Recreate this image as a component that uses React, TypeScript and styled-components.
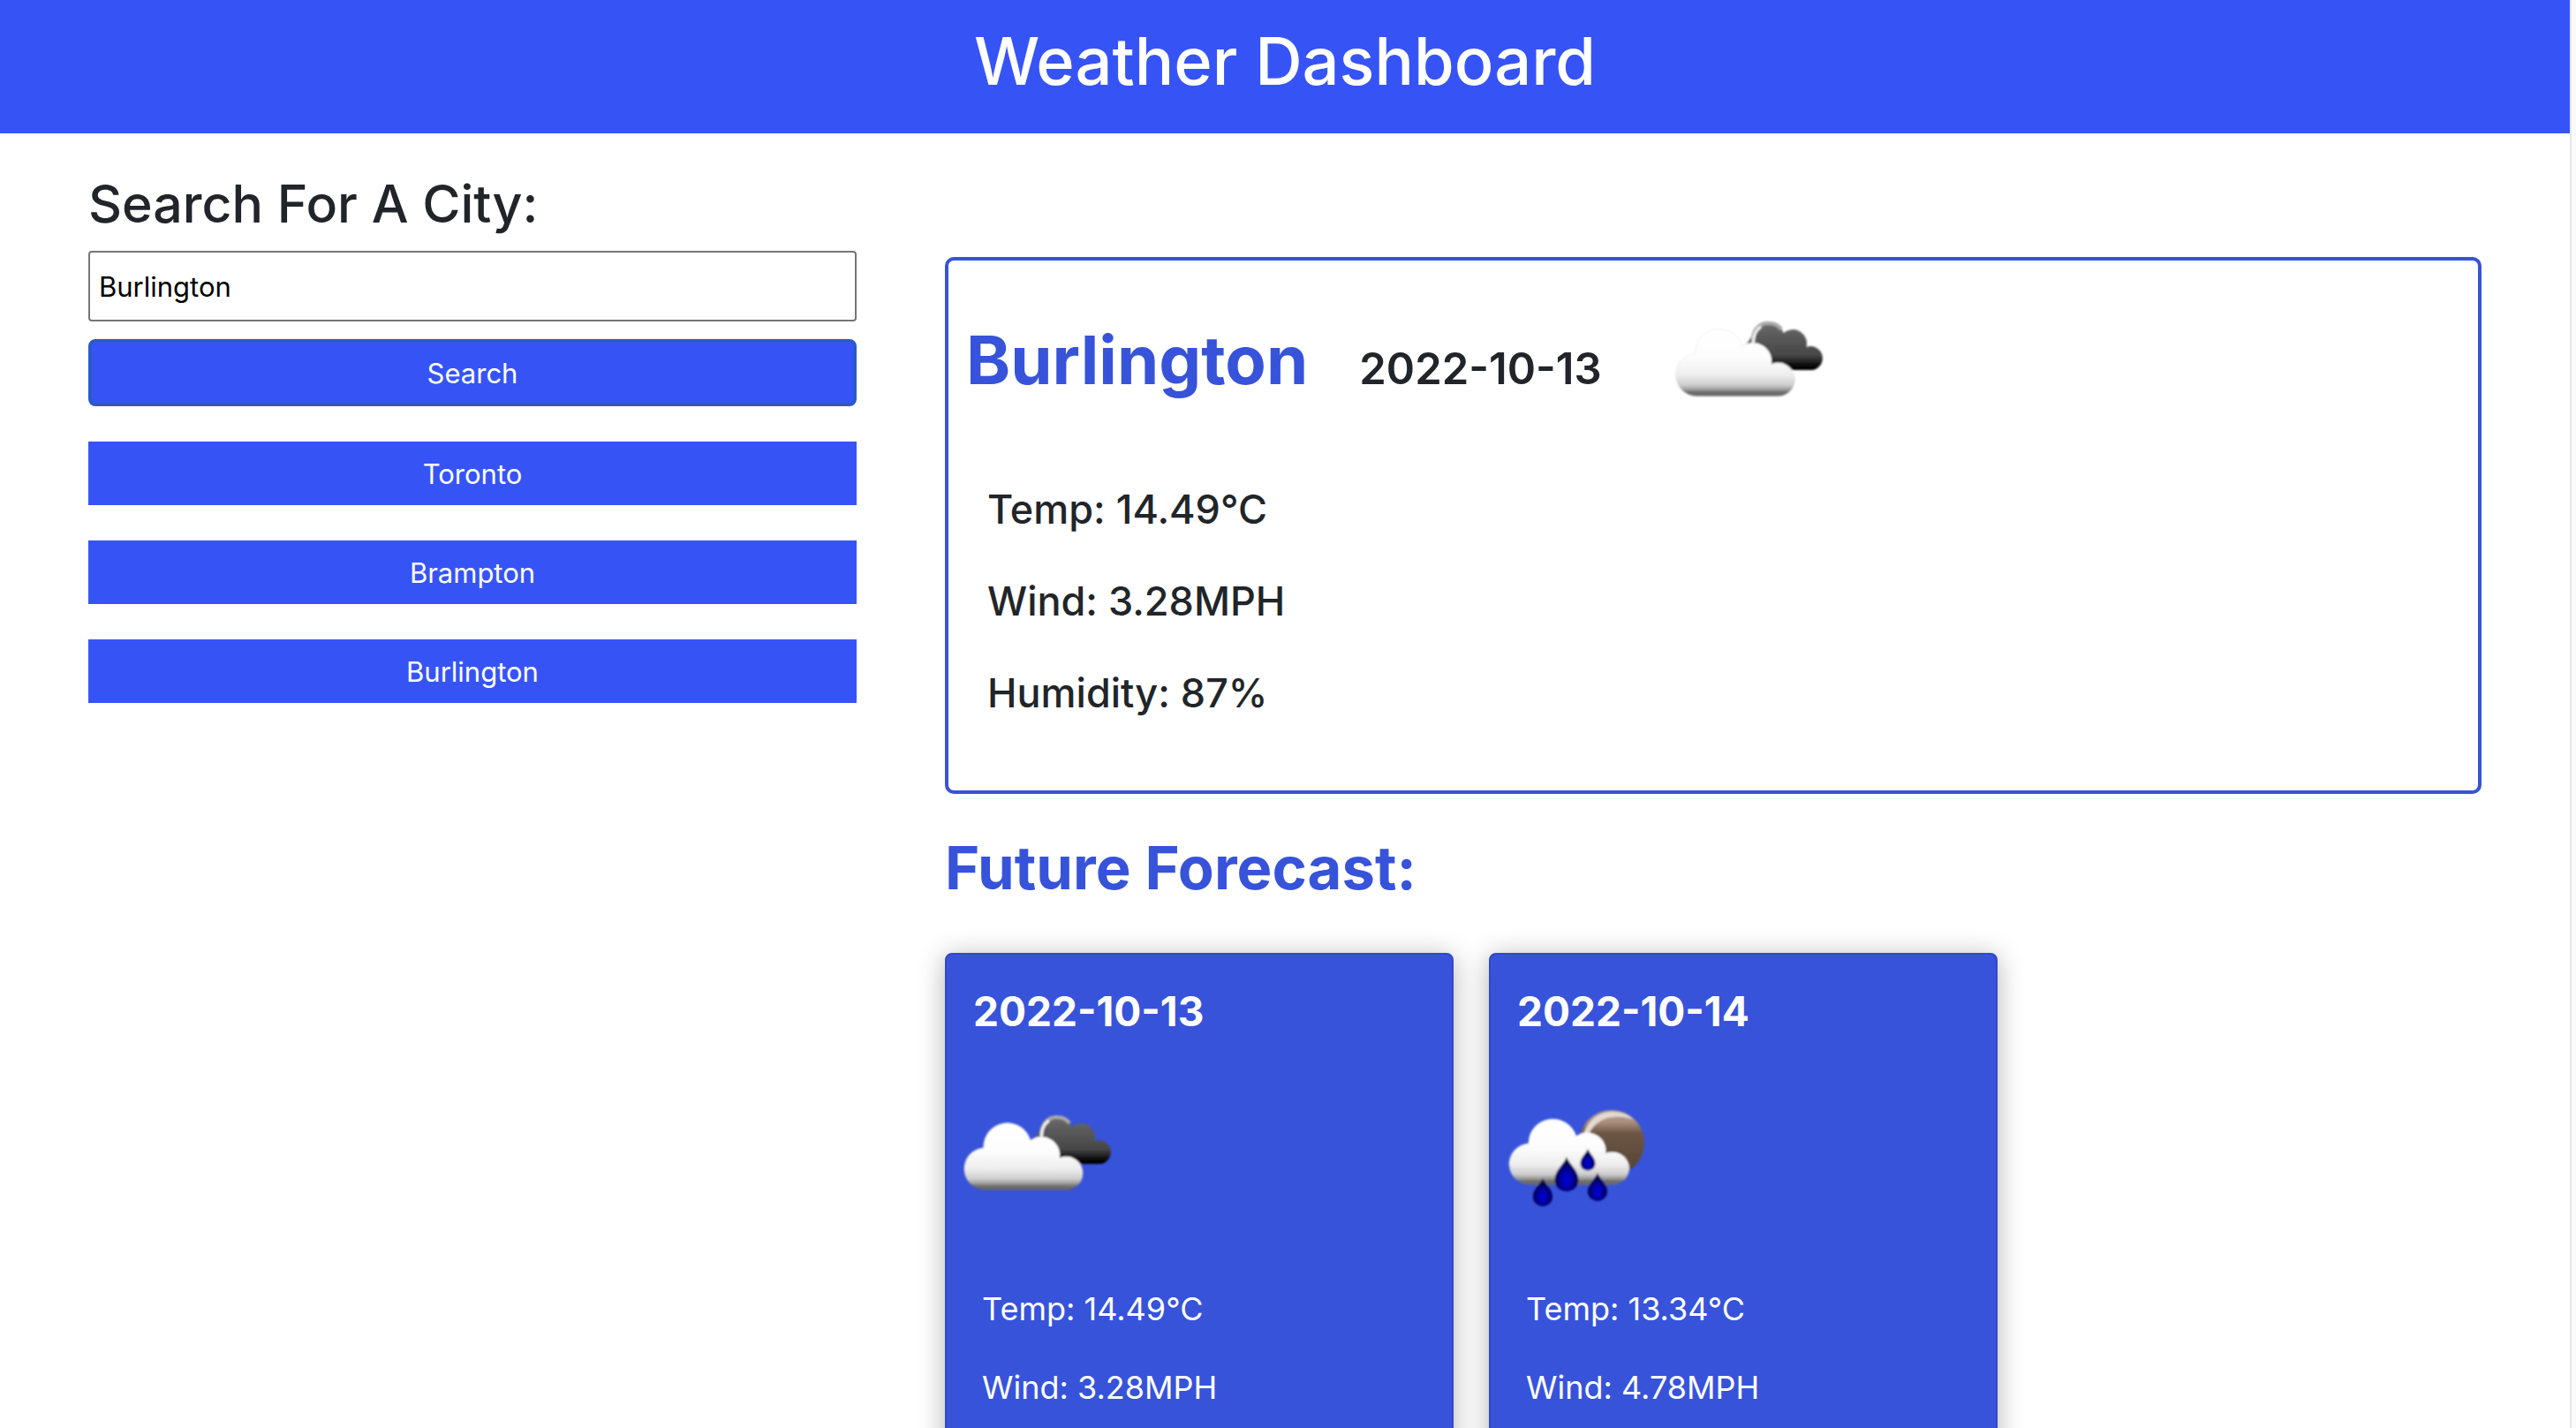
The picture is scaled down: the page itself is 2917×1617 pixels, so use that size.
import React, { useId, useState } from "react";
import styled, { createGlobalStyle } from "styled-components";

const colors = {
  bright: "#3654f6",
  royal: "#3753da",
  ink: "#212529",
};

const GlobalStyle = createGlobalStyle`
  *, *::before, *::after { box-sizing: border-box; }
  body {
    margin: 0;
    background: #ffffff;
    color: ${colors.ink};
    font-family: Inter, "Liberation Sans", sans-serif;
    font-size: 31px;
    font-weight: 400;
  }
  h1, h2, h3, p, ul { margin: 0; padding: 0; }
  button, input { font: inherit; margin: 0; }
`;

const Page = styled.div`
  display: grid;
  grid-template-columns: minmax(0, 1fr) 7px;
  height: 100vh;
  overflow: hidden;
`;

const ScrollTrack = styled.div`
  border-left: 2px solid #e8e8e8;
  background: #fafafa;
`;

const Header = styled.header`
  padding: 21px 0 34px;
  background: ${colors.bright};
  color: #ffffff;
  text-align: center;
`;

const Title = styled.h1`
  font-size: 74px;
  font-weight: 500;
  line-height: 96px;
`;

const Columns = styled.main`
  display: grid;
  grid-template-columns: minmax(0, 1fr) minmax(0, 2fr);
  gap: 100px;
  padding: 0 100px;
`;

const SearchColumn = styled.form`
  display: flex;
  flex-direction: column;
  padding-top: 44px;
`;

const SearchHeading = styled.h2`
  margin-bottom: 17px;
  font-size: 59px;
  font-weight: 500;
  line-height: 72px;
`;

const CityInput = styled.input`
  width: 100%;
  height: 80px;
  margin-bottom: 20px;
  padding: 2px 10px;
  border: 2px solid #767676;
  border-radius: 4px;
  outline: none;
  background: #ffffff;
  color: #000000;
`;

const SearchButton = styled.button`
  height: 76px;
  border: 4px solid #285bc8;
  border-radius: 8px;
  background: ${colors.bright};
  color: #ffffff;
  cursor: pointer;
`;

const History = styled.ul`
  display: flex;
  flex-direction: column;
  gap: 40px;
  margin-top: 40px;
  list-style: none;
`;

const HistoryButton = styled.button`
  display: block;
  width: 100%;
  height: 72px;
  border: 0;
  background: ${colors.bright};
  color: #ffffff;
  cursor: pointer;
`;

const WeatherColumn = styled.div`
  padding-top: 140px;
`;

const CurrentCard = styled.section`
  padding: 10px 20px 82px;
  border: 4px solid ${colors.royal};
  border-radius: 10px;
`;

const CurrentHead = styled.div`
  display: flex;
  align-items: center;
  gap: 64px;
`;

const CurrentTitle = styled.div`
  display: flex;
  align-items: baseline;
  gap: 58px;
  padding-top: 4px;
`;

const CityName = styled.h2`
  color: ${colors.royal};
  font-size: 76px;
  font-weight: 700;
  line-height: 92px;
`;

const CurrentDate = styled.h3`
  font-size: 49px;
  font-weight: 600;
  line-height: 60px;
`;

const CurrentReadings = styled.div`
  display: flex;
  flex-direction: column;
  gap: 48px;
  margin-top: 44px;
  padding-left: 24px;
  font-size: 45px;
  font-weight: 500;
  line-height: 56px;
`;

const ForecastHeading = styled.h2`
  margin: 44px 0 56px;
  color: ${colors.royal};
  font-size: 67px;
  font-weight: 700;
  line-height: 80px;
`;

const ForecastList = styled.div`
  display: flex;
  gap: 40px;
`;

const ForecastCard = styled.article`
  flex: 0 1 576px;
  min-height: 720px;
  padding-top: 36px;
  border: 2px solid #2f4bc2;
  border-radius: 8px;
  background: ${colors.royal};
  box-shadow: 0 4px 30px rgba(0, 0, 0, 0.3);
  color: #ffffff;
`;

const ForecastDate = styled.h3`
  margin-bottom: 31px;
  padding-left: 30px;
  font-size: 46px;
  font-weight: 700;
  line-height: 56px;
`;

const ForecastReadings = styled.div`
  display: flex;
  flex-direction: column;
  gap: 41px;
  margin-top: 54px;
  padding-left: 40px;
  font-size: 36px;
  line-height: 48px;
`;

const IconSvg = styled.svg`
  display: block;
  flex: none;
  width: 200px;
  height: 200px;
`;

const CLOUD =
  "M44 143.5A24 24 0 0 1 39.5 95.5A27.3 27.3 0 0 1 93 87A21 21 0 0 1 126 107A19 19 0 1 1 134 143.5Z";
const BACK_CLOUD =
  "M93 88C99 84 100 81 103.5 76A18.5 18.5 0 0 1 139.5 72A16 16 0 0 1 165.5 88A13.5 13.5 0 1 1 172 114L128 114L110 92Z";
const DROP =
  "M0 0C2.5 8 13.5 15 13.5 26A13.5 13 0 0 1 -13.5 26C-13.5 15 -2.5 8 0 0Z";

const DROPS = [
  { x: 86, y: 106, scale: 1 },
  { x: 110, y: 97, scale: 0.63 },
  { x: 59, y: 130, scale: 0.82 },
  { x: 121, y: 124, scale: 0.82 },
];

type Sky = "clouds" | "rain";

function WeatherIcon({ sky }: { sky: Sky }) {
  const id = useId();
  const ref = (name: string) => `url(#${id}${name})`;
  return (
    <IconSvg viewBox="0 0 200 200" role="img" aria-label={sky}>
      <defs>
        <linearGradient id={`${id}cloud`} x1="0" y1="66" x2="0" y2="144" gradientUnits="userSpaceOnUse">
          <stop offset="0" stopColor="#ffffff" />
          <stop offset="0.42" stopColor="#fdfdfd" />
          <stop offset="0.68" stopColor="#efefef" />
          <stop offset="0.83" stopColor="#cfcfcf" />
          <stop offset="0.9" stopColor="#9c9c9c" />
          <stop offset="0.94" stopColor="#6c6c6c" />
          <stop offset="1" stopColor="#6a6a6a" />
        </linearGradient>
        <linearGradient id={`${id}back`} x1="0" y1="57" x2="0" y2="114" gradientUnits="userSpaceOnUse">
          <stop offset="0" stopColor="#707070" />
          <stop offset="0.3" stopColor="#5c5c5c" />
          <stop offset="0.7" stopColor="#474747" />
          <stop offset="0.92" stopColor="#080808" />
          <stop offset="1" stopColor="#000000" />
        </linearGradient>
        <linearGradient id={`${id}moon`} x1="0" y1="52" x2="0" y2="127" gradientUnits="userSpaceOnUse">
          <stop offset="0" stopColor="#b9a79c" />
          <stop offset="0.2" stopColor="#a98d7b" />
          <stop offset="0.36" stopColor="#6d5645" />
          <stop offset="1" stopColor="#54432f" />
        </linearGradient>
        <radialGradient id={`${id}drop`} cx="0.5" cy="0.66" r="0.52">
          <stop offset="0" stopColor="#0000dc" />
          <stop offset="0.35" stopColor="#0000b8" />
          <stop offset="0.75" stopColor="#00006c" />
          <stop offset="1" stopColor="#000044" />
        </radialGradient>
        <filter id={`${id}soft`} x="0" y="0" width="200" height="200" filterUnits="userSpaceOnUse">
          <feGaussianBlur stdDeviation="1.1" />
        </filter>
      </defs>
      {sky === "clouds" ? (
        <g filter={ref("soft")} transform="translate(2 0)">
          <path d={BACK_CLOUD} fill={ref("back")} />
          <path
            d="M105 82C105 69 112 62 121 61C128 60.5 134 63 137 68"
            fill="none"
            stroke="#a9a9a9"
            strokeWidth="4"
          />
          <path d="M105.5 83C105.5 74 109 68 114 65" fill="none" stroke="#f4f4f4" strokeWidth="3" />
          <path d={CLOUD} fill={ref("cloud")} stroke="#000000" strokeOpacity="0.07" strokeWidth="1" />
        </g>
      ) : (
        <g filter={ref("soft")}>
          <circle cx="137" cy="90" r="37" fill={ref("moon")} />
          <path
            d="M105 81C111 62 124 55 138 55C148 55 156 58 162 64C150 59 132 59 122 67C116 71 113 76 111 81Z"
            fill="#e4d9d2"
          />
          <g transform="translate(3 -3) scale(1.01 0.98)">
            <path d={CLOUD} fill={ref("cloud")} />
          </g>
          {DROPS.map((drop) => (
            <path
              key={`${drop.x}-${drop.y}`}
              d={DROP}
              fill={ref("drop")}
              transform={`translate(${drop.x} ${drop.y}) scale(${drop.scale})`}
            />
          ))}
        </g>
      )}
    </IconSvg>
  );
}

const cities = ["Toronto", "Brampton", "Burlington"];

const forecast: { date: string; sky: Sky; temp: string; wind: string }[] = [
  { date: "2022-10-13", sky: "clouds", temp: "14.49", wind: "3.28" },
  { date: "2022-10-14", sky: "rain", temp: "13.34", wind: "4.78" },
];

export default function App() {
  const [query, setQuery] = useState("Burlington");
  return (
    <>
      <GlobalStyle />
      <Page>
        <div>
          <Header>
            <Title>Weather Dashboard</Title>
          </Header>
          <Columns>
            <SearchColumn onSubmit={(event) => event.preventDefault()}>
              <SearchHeading>
                <label htmlFor="city">Search For A City:</label>
              </SearchHeading>
              <CityInput
                id="city"
                type="text"
                value={query}
                onChange={(event) => setQuery(event.target.value)}
              />
              <SearchButton type="submit">Search</SearchButton>
              <History>
                {cities.map((city) => (
                  <li key={city}>
                    <HistoryButton type="button" onClick={() => setQuery(city)}>
                      {city}
                    </HistoryButton>
                  </li>
                ))}
              </History>
            </SearchColumn>
            <WeatherColumn>
              <CurrentCard>
                <CurrentHead>
                  <CurrentTitle>
                    <CityName>Burlington</CityName>
                    <CurrentDate>2022-10-13</CurrentDate>
                  </CurrentTitle>
                  <WeatherIcon sky="clouds" />
                </CurrentHead>
                <CurrentReadings>
                  <p>Temp: 14.49°C</p>
                  <p>Wind: 3.28MPH</p>
                  <p>Humidity: 87%</p>
                </CurrentReadings>
              </CurrentCard>
              <ForecastHeading>Future Forecast:</ForecastHeading>
              <ForecastList>
                {forecast.map((day) => (
                  <ForecastCard key={day.date}>
                    <ForecastDate>{day.date}</ForecastDate>
                    <WeatherIcon sky={day.sky} />
                    <ForecastReadings>
                      <p>Temp: {day.temp}°C</p>
                      <p>Wind: {day.wind}MPH</p>
                    </ForecastReadings>
                  </ForecastCard>
                ))}
              </ForecastList>
            </WeatherColumn>
          </Columns>
        </div>
        <ScrollTrack />
      </Page>
    </>
  );
}
